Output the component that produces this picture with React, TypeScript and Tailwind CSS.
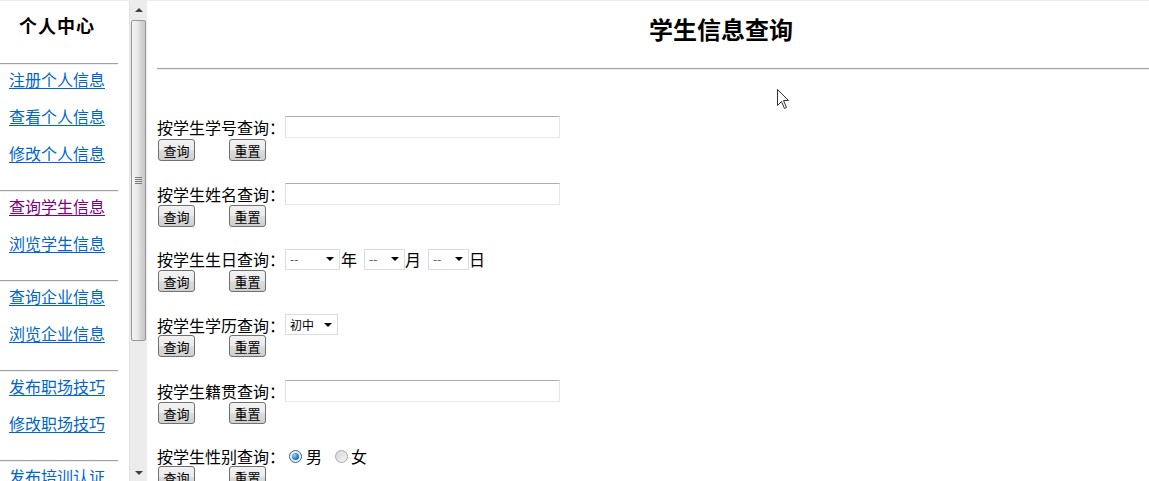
import React from "react";

const FONT = "font-['Noto_Sans_CJK_SC','Noto_Sans',sans-serif]";

function Hr({ w }: { w: string }) {
  return <div className={`${w} h-[2px] border-t border-[#a0a0a0] border-b border-b-[#efefef] shrink-0`} />;
}

function NavLink({ text, visited }: { text: string; visited?: boolean }) {
  return (
    <div className="h-[37px] pt-[2px] pl-[9px] shrink-0">
      <a
        href="#"
        className={`text-[16px] leading-[16px] underline underline-offset-[2px] ${visited ? "text-[#800080]" : "text-[#0066cc]"}`}
      >
        {text}
      </a>
    </div>
  );
}

function Section({ links, visitedIndex }: { links: string[]; visitedIndex?: number }) {
  return (
    <div className="flex flex-col">
      <Hr w="w-[118px]" />
      {links.map((l, i) => (
        <NavLink key={l} text={l} visited={i === visitedIndex} />
      ))}
      <div className="h-[14px] shrink-0" />
    </div>
  );
}

function Scrollbar() {
  return (
    <div className="w-[18px] h-full flex flex-col bg-[#ececec] border-l border-[#e2e2e2] shrink-0">
      <div className="h-[17px] flex items-center justify-center shrink-0">
        <div className="w-0 h-0 border-l-[4px] border-r-[4px] border-b-[4px] border-l-transparent border-r-transparent border-b-[#404040]" />
      </div>
      <div className="flex-1 flex flex-col px-[1px]">
        <div className="mt-[2px] h-[321px] rounded-[2px] border border-[#979797] bg-[linear-gradient(90deg,#f4f4f4_0%,#e8e8e8_45%,#d4d4d4_70%,#c8c8c8_100%)] flex items-center justify-center">
          <div className="flex flex-col gap-[1px]">
            <div className="w-[7px] h-[1px] bg-[#7a7a7a]" />
            <div className="w-[7px] h-[1px] bg-[#7a7a7a]" />
            <div className="w-[7px] h-[1px] bg-[#7a7a7a]" />
            <div className="w-[7px] h-[1px] bg-[#7a7a7a]" />
          </div>
        </div>
      </div>
      <div className="h-[17px] flex items-center justify-center shrink-0">
        <div className="w-0 h-0 border-l-[4px] border-r-[4px] border-t-[4px] border-l-transparent border-r-transparent border-t-[#404040]" />
      </div>
    </div>
  );
}

function Btn({ text, className = "" }: { text: string; className?: string }) {
  return (
    <button
      type="button"
      className={`w-[37px] h-[22px] border border-[#707070] rounded-[3px] bg-[linear-gradient(#f2f2f2_0%,#ebebeb_50%,#dddddd_50%,#cfcfcf_100%)] text-[13px] leading-none text-black flex items-center justify-center ${className}`}
    >
      {text}
    </button>
  );
}

function Buttons() {
  return (
    <div className="flex h-[22px] shrink-0">
      <Btn text="查询" className="ml-[1px]" />
      <Btn text="重置" className="ml-[34px]" />
    </div>
  );
}

function TextBox() {
  return (
    <div className="w-[275px] h-[22px] border border-[#e3e9ef] border-t-[#abadb3] border-l-[#dbdfe6] bg-white" />
  );
}

function Arrow() {
  return (
    <div className="w-0 h-0 border-l-[4px] border-r-[4px] border-t-[4px] border-l-transparent border-r-transparent border-t-black" />
  );
}

function Select({ w, text, textClass = "" }: { w: string; text: string; textClass?: string }) {
  return (
    <div className={`${w} h-[21px] border border-[#d9dce3] bg-white flex items-center justify-between pl-[4px] pr-[5px]`}>
      <span className={`text-[12px] leading-none ${textClass}`}>{text}</span>
      <Arrow />
    </div>
  );
}

function Radio({ checked }: { checked?: boolean }) {
  return checked ? (
    <div className="w-[13px] h-[13px] rounded-full border border-[#2c628b] bg-[#eaf3fb] flex items-center justify-center">
      <div className="w-[7px] h-[7px] rounded-full bg-[radial-gradient(circle_at_35%_35%,#9ad3f7_0%,#2a7ec4_55%,#10477a_100%)]" />
    </div>
  ) : (
    <div className="w-[13px] h-[13px] rounded-full border border-[#a8a8a8] bg-[linear-gradient(135deg,#d4d4d4,#f6f6f6)]" />
  );
}

function Row({
  h,
  lh,
  label,
  children,
}: {
  h: string;
  lh: string;
  label: string;
  children: React.ReactNode;
}) {
  return (
    <div className={`${h} flex flex-col shrink-0`}>
      <div className={`${lh} flex items-center text-[16px] leading-[16px] text-black shrink-0`}>
        <span>{label}</span>
        {children}
      </div>
      <Buttons />
    </div>
  );
}

function Cursor() {
  return (
    <svg className="absolute left-[630px] top-[88px]" width="13" height="21" viewBox="0 0 13 21">
      <path
        d="M0.5 0.5 L0.5 16.5 L4.5 12.5 L7.5 19.5 L9.5 18.5 L6.5 11.5 L11.5 11.5 Z"
        fill="white"
        stroke="#333"
        strokeWidth="1"
        strokeLinejoin="round"
      />
    </svg>
  );
}

export default function App() {
  return (
    <div className={`w-[1149px] h-[481px] overflow-hidden bg-white flex border-t border-[#ececec] ${FONT}`}>
      {/* left frame */}
      <div className="w-[147px] h-full flex shrink-0">
        <div className="w-[129px] h-full overflow-hidden flex flex-col shrink-0">
          <div className="h-[62px] pt-[15px] pl-[19px] shrink-0">
            <div className="text-[18px] leading-[18px] font-bold text-black tracking-[1px]">个人中心</div>
          </div>
          <Section links={["注册个人信息", "查看个人信息", "修改个人信息"]} />
          <Section links={["查询学生信息", "浏览学生信息"]} visitedIndex={0} />
          <Section links={["查询企业信息", "浏览企业信息"]} />
          <Section links={["发布职场技巧", "修改职场技巧"]} />
          <Section links={["发布培训认证"]} />
        </div>
        <Scrollbar />
      </div>

      {/* right frame */}
      <div className="flex-1 h-full pl-[10px] relative overflow-hidden flex flex-col">
        <div className="h-[67px] pt-[16px] pl-[492px] shrink-0">
          <div className="text-[24px] leading-[24px] font-bold text-black">学生信息查询</div>
        </div>
        <Hr w="w-full" />
        <div className="h-[45px] shrink-0" />

        <Row h="h-[67px]" lh="h-[24px]" label="按学生学号查询：">
          <TextBox />
        </Row>
        <Row h="h-[66px]" lh="h-[23px]" label="按学生姓名查询：">
          <TextBox />
        </Row>
        <Row h="h-[66px]" lh="h-[22px]" label="按学生生日查询：">
          <Select w="w-[55px]" text="--" textClass="text-[#6a4a20]" />
          <span className="ml-[1px]">年</span>
          <div className="w-[7px]" />
          <Select w="w-[41px]" text="--" textClass="text-[#1f4f9a]" />
          <span>月</span>
          <div className="w-[7px]" />
          <Select w="w-[41px]" text="--" textClass="text-[#6a4a20]" />
          <span>日</span>
        </Row>
        <Row h="h-[65px]" lh="h-[21px]" label="按学生学历查询：">
          <Select w="w-[53px]" text="初中" textClass="text-black" />
        </Row>
        <Row h="h-[67px]" lh="h-[23px]" label="按学生籍贯查询：">
          <TextBox />
        </Row>
        <Row h="h-[44px]" lh="h-[20px]" label="按学生性别查询：">
          <div className="ml-[4px]">
            <Radio checked />
          </div>
          <span className="ml-[4px]">男</span>
          <div className="ml-[13px]">
            <Radio />
          </div>
          <span className="ml-[3px]">女</span>
        </Row>

        <Cursor />
      </div>
    </div>
  );
}
